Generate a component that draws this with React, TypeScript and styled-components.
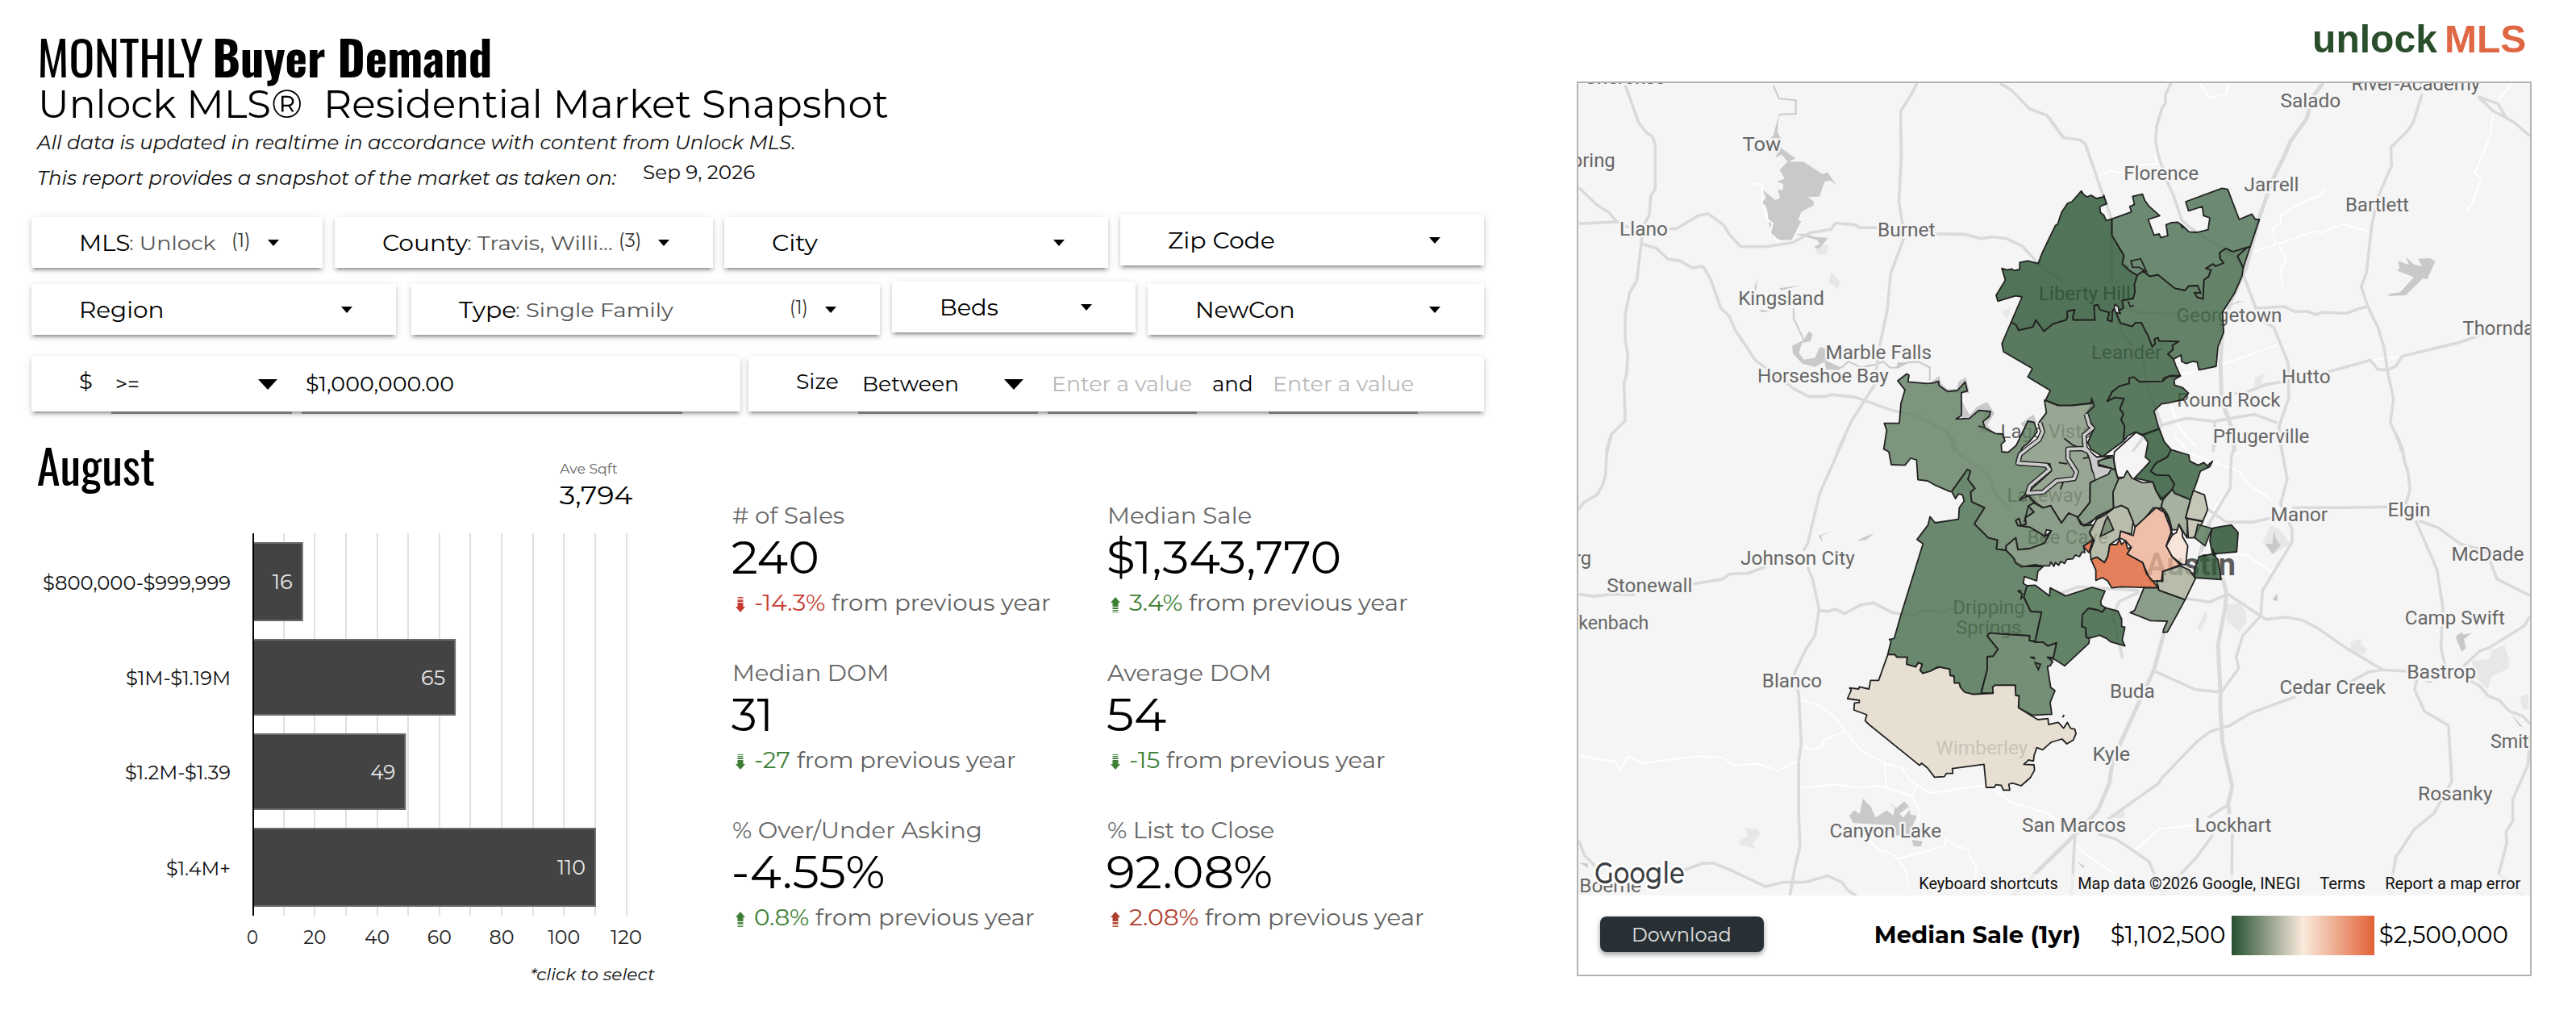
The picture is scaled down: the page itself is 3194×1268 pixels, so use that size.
import { useLayoutEffect, useRef, useState, type ReactNode } from 'react';
import styled, { createGlobalStyle } from 'styled-components';

const sans = `'Montserrat', Inter, 'Open Sans', sans-serif`;
const narrow = `'Oswald', 'Liberation Sans Narrow', Roboto, sans-serif`;

const GlobalStyles = createGlobalStyle`
  * { box-sizing: border-box; }
  body { margin: 0; background: #fff; }
`;

const Page = styled.main`
  width: 3194px;
  height: 1268px;
  display: flex;
  overflow: hidden;
  background: #fff;
  color: #000;
  font-family: ${sans};
`;

// ---------- text stretched to a given width ----------

const FitBox = styled.span<{ $w: number }>`
  display: block;
  flex: none;
  width: ${p => p.$w}px;
  white-space: nowrap;
`;

const FitInner = styled.span`
  display: inline-block;
  white-space: pre;
  transform-origin: 0 50%;
`;

const Fit = ({ w, className, children }: { w: number; className?: string; children: ReactNode }) => {
  const ref = useRef<HTMLSpanElement>(null);
  const [scale, setScale] = useState(1);

  useLayoutEffect(() => {
    const el = ref.current!;
    const em = parseFloat(getComputedStyle(el).fontSize);
    setScale((w + em * 0.08) / el.offsetWidth);
  }, [w]);

  return (
    <FitBox $w={w} className={className}>
      <FitInner ref={ref} style={{ transform: `translateX(-0.04em) scaleX(${scale})` }}>
        {children}
      </FitInner>
    </FitBox>
  );
};

// ---------- left side ----------

const Left = styled.section`
  width: 1955px;
  flex: none;
  padding-top: 35px;
`;

const Heading = styled.h1`
  margin: 0 0 2px 49px;
  display: flex;
  gap: 17px;
  font: 400 60px/68px ${narrow};
`;

const Strong = styled(Fit)`
  font-weight: 700;
`;

const SubHeading = styled.h2`
  margin: 0 0 2px 49px;
  font-size: 48px;
  line-height: 48px;
  font-weight: 400;
`;

const Note = styled.div`
  display: flex;
  margin-left: 47px;
  height: 44px;
  font-size: 24px;
  line-height: 44px;
  font-style: italic;
  color: #111;
`;

const SnapshotDate = styled(Fit)`
  margin-left: 35px;
  line-height: 29px;
  font-style: normal;
`;

const Filters = styled.div`
  margin: 26px 0 0 39px;
  width: 1801px;
`;

const FilterRow = styled.div<{ $h: number; $mb: number }>`
  display: flex;
  align-items: flex-start;
  height: ${p => p.$h}px;
  margin-bottom: ${p => p.$mb}px;
`;

const Card = styled.div<{ $w: number; $up?: boolean; $ml?: number }>`
  width: ${p => p.$w}px;
  flex: none;
  height: 100%;
  margin: ${p => (p.$up ? -3 : 0)}px 0 0 ${p => p.$ml ?? 0}px;
  padding: 0 54px 0 60px;
  display: flex;
  align-items: center;
  background: #fff;
  box-shadow: 0 6px 2px -4px rgba(0, 0, 0, 0.2), 0 4px 4px rgba(0, 0, 0, 0.16), 0 2px 10px rgba(0, 0, 0, 0.13);
  font-size: 28px;
  line-height: 40px;
`;

const Chosen = styled(Fit)`
  margin-left: 1px;
  font-size: 25px;
  line-height: 42px;
  color: #555;
`;

const Count = styled(Fit)`
  font-size: 24px;
  color: #333;
  margin: -5px 22px 0 0;
`;

const Spacer = styled.span`
  flex: 1;
`;

const Caret = styled.i<{ $big?: boolean }>`
  flex: none;
  border-style: solid;
  border-color: #000 transparent transparent;
  border-width: ${p => (p.$big ? '13px 12.5px 0' : '8px 7px 0')};
`;

const Field = styled.div<{ $w: number; $ml: number }>`
  width: ${p => p.$w}px;
  margin-left: ${p => p.$ml}px;
  height: 100%;
  flex: none;
  display: flex;
  align-items: center;
  justify-content: space-between;
  padding: 0 18px 0 6px;
  box-shadow: 0 3px 0 #777;
  font-size: 26px;
`;

const Unit = styled(Fit)`
  margin-top: -7px;
  font-size: 27px;
`;

const Placeholder = styled(Fit)`
  color: #b8b8b8;
`;

const And = styled(Fit)`
  margin: 0 0 0 20px;
  font-size: 26px;
`;

const Lower = styled.div`
  display: flex;
  align-items: flex-start;
`;

const ChartPanel = styled.div`
  width: 908px;
  flex: none;
`;

const ChartHead = styled.div`
  height: 139px;
  padding: 31px 0 0 48px;
  display: flex;
`;

const Month = styled(Fit)`
  font: 400 58px/70px ${narrow};
`;

const Sqft = styled.div`
  margin: 28px 0 0 505px;
`;

const SqftLabel = styled(Fit)`
  font-size: 17px;
  line-height: 24px;
  color: #666;
`;

const SqftValue = styled(Fit)`
  font-size: 32px;
  line-height: 42px;
`;

const ChartSvg = styled.svg`
  display: block;
  font-family: ${sans};
`;

const ClickNote = styled(Fit)`
  margin-left: 658px;
  font-size: 21px;
  line-height: 30px;
  font-style: italic;
  color: #111;
`;

const Stats = styled.div`
  display: grid;
  grid-template-columns: 464.5px 464.5px;
  row-gap: 47px;
  padding: 111px 0 0 1px;
`;

const StatLabel = styled(Fit)`
  font-size: 28px;
  line-height: 36px;
  color: #666;
`;

const StatValue = styled(Fit)`
  font-size: 57px;
  line-height: 68px;
`;

const Delta = styled.div<{ $c: string }>`
  display: flex;
  align-items: center;
  padding-left: 3px;
  font-size: 28px;
  line-height: 44px;
  color: ${p => p.$c};
`;

const DeltaArrow = styled.svg<{ $up: boolean }>`
  flex: none;
  margin: 4px 12px 0 0;
  transform: ${p => (p.$up ? 'none' : 'scaleY(-1)')};
`;

const FromPrev = styled(Fit)`
  margin-left: 10px;
  color: #5f5f5f;
`;

type FilterProps = {
  label: string;
  labelW: number;
  w: number;
  ml?: number;
  up?: boolean;
  chosen?: string;
  chosenW?: number;
  count?: string;
  countW?: number;
};

const Filter = ({ label, labelW, w, ml, up, chosen, chosenW = 0, count, countW = 0 }: FilterProps) => (
  <Card $w={w} $up={up} $ml={ml}>
    <Fit w={labelW}>{label}</Fit>
    {chosen && <Chosen w={chosenW}>{chosen}</Chosen>}
    <Spacer />
    {count && <Count w={countW}>{count}</Count>}
    <Caret />
  </Card>
);

const GREEN = '#3d8035';
const RED = '#c73a2f';

const stats = [
  { label: '# of Sales', lw: 137, value: '240', vw: 105, up: false, d: '-14.3%', dw: 86, color: RED },
  { label: 'Median Sale', lw: 177, value: '$1,343,770', vw: 287, up: true, d: '3.4%', dw: 64, color: GREEN },
  { label: 'Median DOM', lw: 192, value: '31', vw: 48, up: false, d: '-27', dw: 43, color: GREEN },
  { label: 'Average DOM', lw: 201, value: '54', vw: 70, up: false, d: '-15', dw: 36, color: GREEN },
  { label: '% Over/Under Asking', lw: 308, value: '-4.55%', vw: 186, up: true, d: '0.8%', dw: 66, color: GREEN },
  { label: '% List to Close', lw: 205, value: '92.08%', vw: 202, up: true, d: '2.08%', dw: 84, color: '#b0412f' },
];

const bars = [
  { label: '$800,000-$999,999', lw: 233, v: 16, vw: 25, y: 22, h: 98 },
  { label: '$1M-$1.19M', lw: 130, v: 65, vw: 30, y: 142, h: 95 },
  { label: '$1.2M-$1.39', lw: 131, v: 49, vw: 31, y: 259, h: 95 },
  { label: '$1.4M+', lw: 80, v: 110, vw: 35, y: 376, h: 98 },
];
const AXIS_X = 313;
const UNIT = 3.863;
const tickWidths = [14, 28, 31, 30, 31, 40, 39];

const BarChart = () => (
  <ChartSvg width="908" height="544" viewBox="0 -1 908 544">
    {Array.from({ length: 12 }, (_, i) => (
      <rect key={i} x={Math.round(AXIS_X + (i + 1) * 10 * UNIT) - 1} y="11" width="2" height="474" fill="#e0e0e0" />
    ))}
    {bars.map(b => (
      <g key={b.label}>
        <rect x={AXIS_X + 1} y={b.y + 1} width={b.v * UNIT - 1} height={b.h - 2} fill="#434343" stroke="#6a6a6a" strokeWidth="2" />
        <text x={AXIS_X + b.v * UNIT - 12 - b.vw} y={b.y + b.h / 2 + 9} fontSize="26" fill="#e6e6e6" textLength={b.vw} lengthAdjust="spacingAndGlyphs">
          {b.v}
        </text>
        <text x={286 - b.lw} y={b.y + b.h / 2 + 9.5} fontSize="24" fill="#111" textLength={b.lw} lengthAdjust="spacingAndGlyphs">
          {b.label}
        </text>
      </g>
    ))}
    <rect x={AXIS_X} y="11" width="2" height="474" fill="#000" />
    {tickWidths.map((w, i) => (
      <text key={i} x={AXIS_X + i * 20 * UNIT - w / 2} y="520" fontSize="24" fill="#222" textLength={w} lengthAdjust="spacingAndGlyphs">
        {i * 20}
      </text>
    ))}
  </ChartSvg>
);

// ---------- map ----------

const Right = styled.section`
  width: 1184px;
  flex: none;
`;

const Logo = styled.div`
  height: 101px;
  padding: 20px 9px 0 0;
  display: flex;
  justify-content: flex-end;
  gap: 13px;
  font: 700 49px/56px 'Liberation Sans', Arial, sans-serif;
  color: #2a4d2b;
`;

const LogoMls = styled(Fit)`
  color: #e06744;
`;

const MapFrame = styled.div`
  height: 1109px;
  border: 2px solid #b4b4b4;
`;

const MapArea = styled.div`
  position: relative;
  height: 1007px;
  background: #f5f5f5;
`;

const MapSvg = styled.svg`
  display: block;
  font-family: Roboto, sans-serif;

  path { vector-effect: non-scaling-stroke; }
`;

const Attribution = styled.div`
  position: absolute;
  right: 0;
  bottom: 0;
  height: 27px;
  padding: 0 13px 0 14px;
  display: flex;
  gap: 25.5px;
  background: rgba(245, 245, 245, 0.7);
  font: 400 20px/25px Roboto, sans-serif;
  color: #111;
`;

const Legend = styled.div`
  height: 98px;
  padding: 0 28px 0 27px;
  display: flex;
  align-items: center;
  font-size: 29px;
  line-height: 40px;
`;

const DownloadButton = styled.button`
  width: 203px;
  height: 44px;
  margin: -2px 138px 0 0;
  padding: 0 0 0 40px;
  border: 0;
  border-radius: 8px;
  background: #283035;
  box-shadow: 0 3px 6px rgba(0, 0, 0, 0.4);
  color: #e0e0e0;
  font: 400 25px/44px ${sans};
  text-align: left;
`;

const LegendTitle = styled(Fit)`
  margin-right: 39px;
  font-weight: 700;
`;

const Ramp = styled.div`
  width: 177px;
  height: 49px;
  margin: 0 7px 0 9px;
  background: linear-gradient(90deg, #265030, #f9eadc 50%, #e26237);
`;

// Each tile keeps its own local units; origin and scale put it on the map.
const tiles = {
  nw: 'translate(1940 0) scale(.39541 .35714)',
  ne: 'translate(2540 0) scale(.40816 .35714)',
  sw: 'translate(1940 540) scale(.39541 .44643)',
  se: 'translate(2540 540) scale(.40816 .44643)',
  north: 'translate(2260 200) scale(.35714 .33333)',
  central: 'translate(2400 460) scale(.33333)',
  south: 'translate(2260 680) scale(.33333)',
};
type Tile = keyof typeof tiles;

const roads: [Tile, string][] = [
  ['nw', 'M190 295L232 425 258 462 274 472 284 500 284 655 270 680 266 745 244 790 240 850 226 975 204 1015 190 1090 190 1180 198 1230 194 1300 186 1330 190 1460 146 1508 130 1568M45 652L100 710 140 738 165 772M45 776L165 770 200 790M325 794L350 794 420 748 450 742 500 782 515 812 552 856 630 856 715 842 770 808 835 796 850 774 910 780 925 790 980 790M1160 812L1255 813 1305 828 1340 822 1385 828 1435 854 1490 920 1568 980M244 848L288 862 325 900 360 904 400 930 434 924 458 970 490 1070 515 1095 535 1145 598 1250 720 1350 765 1376 815 1376 840 1370 910 1378 1030 1425 1100 1440 1200 1500 1225 1568M1105 288L1088 326 1054 386 1054 450 1056 540 1048 700 1066 820 1022 950 1012 1075 990 1190 970 1340 940 1390 900 1460 855 1568M1365 288L1400 312 1458 378 1512 400 1565 480'],
  ['ne', 'M0 405L45 478 95 485 112 500 160 660 192 760 192 1000 215 1140 240 1180 290 1260 300 1340 345 1480M372 288L355 330 355 358 344 378 328 440 325 490 334 540 360 630 380 680 405 765 430 790 540 870 580 910 600 980 630 1070 715 1064 750 1082 785 1080 812 1092 830 1084 905 1088 940 1072 970 1064M200 1040L240 1070 270 1084 390 1090M630 1070L650 1115 684 1135 728 1260 730 1380 700 1480 710 1568M1135 325L1108 425 1090 455 1040 512 1042 575 1002 680 982 780 966 945 950 995 970 1064 1002 1140 1020 1210 1030 1290 1048 1385 1038 1468 1065 1530 1072 1568M1305 335L1350 385 1385 405 1420 430 1462 472M1305 335L1365 360 1390 408M850 1290L978 1250 1000 1282 1030 1284 1055 1270 1075 1236 1250 1188 1320 1160M565 1365L600 1362 660 1335 705 1326M330 1480L418 1452 505 1462 625 1438 695 1468M505 1462L500 1568M345 1480L300 1500 255 1568'],
  ['sw', 'M146 0L132 50 128 110 118 140 100 165 60 185 45 205M880 0L800 160 762 300 748 320M762 365L778 400 798 482 785 555 758 590 720 660 734 720 742 855 734 905 734 1050 738 1140 722 1200 706 1278M400 412L497 398 517 384 575 382 630 364M45 440L90 446 150 440 220 442M798 485L825 488 850 482 878 494 928 470 968 464 1030 492 1090 498 1130 484 1190 490 1225 478M45 1125L62 1165 95 1195M370 1208L430 1188 465 1186 520 1206 630 1252 685 1240 755 1240 825 1222 870 1240 885 1260 915 1278M1215 0L1230 45 1330 110 1350 160 1400 210'],
  ['se', 'M575 0L555 60 552 145 490 240M515 0L500 40M700 0L725 120 705 190 740 260 740 295 650 430 645 500 590 555 570 615 578 645 525 712 445 705 325 655M545 1025L485 1060M500 1108L490 1120 450 1170 340 1278M558 1105L556 1278M80 1110L70 1278M150 1105L205 1120 305 1182 350 1278M180 1065L335 965 345 950 450 850 490 822 550 805 615 770 750 725M900 692L975 655 1015 650M1090 654L1015 650 905 590 810 530 770 512 720 504 660 510 640 498 545 440 490 462 415 452M485 205L540 240 620 240 680 228M740 200L880 200 1030 198M1115 235L1180 372 1198 480 1192 590 1205 640M1125 236L1185 256 1250 300 1330 320 1362 398 1462 444M1055 0L1075 35 1080 68 1092 100 1098 150 1085 190M1260 640L1310 598 1340 588 1445 528 1462 502M1125 655L1112 705 1142 765 1215 805 1225 960 1170 1050 1112 1092 1055 1170 1035 1278M1280 680L1310 695 1335 722 1370 735 1400 765 1440 778 1462 800M1460 870L1456 915 1410 1010 1410 1070 1390 1100 1392 1130 1368 1216 1440 1278M275 435L215 460 195 500 225 618M0 450L90 420 275 430'],
];

const highways: [Tile, string][] = [
  ['ne', 'M834 288L800 340 785 410 735 490 715 545 680 625 640 755 600 930 560 1030 530 1120 522 1260 526 1390 555 1480 565 1568'],
  ['se', 'M350 550L320 650 220 850 195 900 185 965 150 1040 100 1090 -110 1278M490 240L460 330 530 400 540 435 538 470 515 580 522 712 522 760 528 850 558 975 545 1025 550 1050'],
];

const lanes: [Tile, string][] = [
  ['nw', 'M585 648L600 638 620 640 618 710 632 735 634 760 652 775 644 810 672 838'],
  ['ne', 'M155 608L190 592 220 600 260 575 330 568 325 540M610 878L690 850 815 800 825 808 895 778 968 802M690 850L680 795 705 775 705 750 755 710 820 680 838 660M700 855L722 900 706 930 710 990M1405 290L1370 345M1350 395L1340 480 1295 600 1315 620 1285 710 1268 732M400 1300L520 1268 695 1198M370 1400L400 1490 450 1550M460 288L490 340 540 325 545 290M978 1250L1060 1238'],
  ['sw', 'M45 884L65 892 160 905 175 928 200 890 245 910 300 902 420 890 500 895 530 918 600 910 670 930 728 905M740 735L790 745 840 775 880 820 930 875 1005 910 1060 922 1080 955 1145 992 1330 970 1400 1018 1520 1050 1568 1080M740 978L845 968 930 978 985 972 1090 1000M1005 910L1008 975M750 862L770 872 805 865 812 845 880 820M1104 972L1088 1000 1110 1040 1110 1070M940 1110L985 1150 1025 1160 1045 1175 1190 1140 1195 1120 1230 1140 1265 1150 1290 1200 1290 1240M1045 1175L1070 1210 1085 1278'],
  ['se', 'M380 0L430 50 580 100 600 130 680 180M490 220L545 150M550 330L600 330 680 380M265 1150L335 1092 450 1080M0 1050L50 1110 110 1160 200 1216'],
];

const water: [Tile, string][] = [
  ['nw', 'M700 560L750 562 810 605 824 598 852 642 832 626 815 630 800 682 762 684 780 698 782 712 742 736 732 764 742 768 712 832 680 834 650 822 640 770 636 735 630 712 618 705 632 685 620 658 660 694 676 688 668 658 684 660 686 640 666 630 690 620 674 590 690 572ZM676 512L725 550 700 562 680 536 660 548ZM670 402L655 470 645 480 678 480 668 460ZM750 1180L765 1150 778 1160 770 1185 745 1190 740 1205 735 1225 750 1248 785 1242 800 1205 816 1208 818 1250 865 1275 860 1285 820 1282 815 1255 785 1274 745 1262 715 1225 714 1200ZM725 812L760 812 780 822 825 826 800 862 780 860 800 845 790 832ZM1150 1325L1175 1305 1180 1330 1200 1350 1230 1350 1235 1325 1258 1310 1270 1365 1200 1362ZM1245 1390L1270 1440 1295 1410 1325 1395 1348 1435 1325 1475 1345 1500 1300 1500 1320 1425 1245 1460ZM1430 1470L1470 1438 1480 1465 1450 1500ZM1040 1276L1045 1258 1075 1258ZM595 1000L605 964 600 1010ZM608 1075L645 1078 620 1084ZM672 1000L740 990 680 1008Z'],
  ['ne', 'M1122 898L1158 896 1175 906 1150 970 1138 965 1085 1025 1032 1027 1035 1020 1068 1014 1110 962 1060 940 1066 930 1062 905 1095 920 1085 892 1110 918 1135 925ZM545 1065L575 1045 600 1046 580 1048Z'],
  ['sw', 'M893 1055L908 1040 925 1050 935 1008 960 1030 975 1060 1010 1040 1030 1055 1035 1035 1015 1018 1040 1035 1065 1015 1080 1030 1050 1050 1062 1060 1082 1038 1085 1052 1104 1055 1080 1110 1040 1110 1030 1082 905 1075ZM1088 1122L1122 1126 1118 1140 1095 1140ZM45 1185L72 1188 74 1200ZM915 292L970 270 945 290ZM796 278L840 266 805 278 808 295Z'],
  ['se', 'M685 262L690 285 705 305 680 328 658 300 680 300ZM695 438L696 460 680 455ZM1236 558L1255 545 1260 552 1286 548 1262 565 1268 590 1255 600ZM88 1184L108 1194 106 1202ZM1405 772L1442 810 1430 806ZM1140 682L1170 682 1160 686Z'],
];

const streams: [Tile, string][] = [
  ['nw', 'M655 298L672 342 725 348 725 395 680 397 670 402M718 1070L718 1105 750 1180M865 1278L890 1255 930 1275 975 1265 1000 1255 1020 1276 1045 1276 1075 1258 1110 1256 1145 1275 1145 1320'],
];

const parks: [Tile, string][] = [
  ['nw', 'M785 850L828 852 820 884 792 884ZM835 945L865 980 855 1000 828 982ZM1370 1085L1398 1065 1390 1110Z'],
  ['ne', 'M625 1345L628 1310 660 1298 648 1320 650 1345Z'],
  ['sw', 'M545 1128L575 1110 565 1090 608 1092 612 1108 590 1130 598 1146 550 1136Z'],
  ['se', 'M540 470L580 465 600 490 600 520 580 545 540 515ZM475 488L484 500 462 542 452 535ZM918 572L950 564 950 580 968 592 955 608 920 595ZM1285 625L1340 620 1348 595 1385 582 1400 625 1398 645 1345 670 1335 705 1295 670ZM1432 725L1455 718 1462 760 1440 760ZM650 295L675 250 700 260 735 300 680 330ZM195 1062L205 1045 230 1040 230 1062Z'],
];

const zips: [Tile, string, string][] = [
  ['north', '#285230', 'M898 110L906 124 918 132 932 126 950 138 976 132 976 126 980 140 986 158 962 168 964 190 976 200 984 220 1004 214 1004 275 1030 322 1046 350 1040 382 1058 392 1062 404 1092 424 1082 458 1084 486 1078 510 1040 518 1044 545 1028 556 1026 540 1014 532 1012 548 1006 556 1004 596 988 590 995 562 962 552 955 534 942 536 945 590 870 590 868 578 875 552 848 558 850 580 845 590 800 604 768 632 740 590 730 616 680 628 672 610 654 598 692 504 670 500 608 520 602 498 634 442 622 398 640 404 656 400 664 406 684 402 684 376 712 370 748 380 762 340 808 238 815 235 830 188 850 156 865 150Z'],
  ['north', '#4a6f50', 'M1004 214L1072 188 1066 168 1082 160 1076 130 1110 122 1118 145 1132 166 1170 202 1130 216 1150 274 1168 270 1174 284 1198 276 1192 236 1210 228 1232 226 1250 240 1272 262 1300 264 1338 254 1344 210 1322 202 1318 168 1270 184 1260 150 1386 100 1406 104 1446 216 1490 196 1502 216 1516 216 1484 318 1474 320 1424 336 1400 324 1378 340 1380 362 1392 378 1364 390 1354 382 1330 398 1348 404 1340 428 1324 440 1320 512 1300 505 1290 488 1312 490 1302 462 1270 464 1258 480 1222 472 1164 422 1136 428 1112 408 1092 424 1062 404 1040 382 1046 350 1030 322 1004 275Z'],
  ['north', '#4a6f50', 'M1474 320L1440 352 1460 396 1484 318Z'],
  ['north', '#3e6544', 'M1092 424L1112 408 1136 428 1164 422 1222 472 1258 480 1270 464 1302 462 1312 490 1290 488 1300 505 1320 512 1324 440 1340 428 1348 404 1330 398 1354 382 1364 390 1392 378 1380 362 1378 340 1400 324 1424 336 1474 320 1440 352 1460 396 1456 426 1430 490 1388 560 1392 636 1372 690 1366 762 1306 776 1300 746 1285 744 1262 752 1246 744 1244 720 1218 736 1198 716 1216 700 1214 684 1236 670 1168 668 1164 656 1152 660 1154 678 1144 690 1130 650 1118 626 1106 600 1086 600 1074 614 1034 602 1018 562 1034 566 1028 556 1044 545 1040 518 1078 510 1084 486 1082 458Z'],
  ['north', '#335b3a', 'M654 598L672 610 680 628 730 616 740 590 768 632 800 604 845 590 850 580 848 558 875 552 868 578 870 590 945 590 942 536 955 534 962 552 995 562 988 590 1004 596 1006 556 1012 548 1034 602 1074 614 1086 600 1106 600 1118 626 1130 650 1144 690 1154 678 1152 660 1164 656 1168 668 1236 670 1214 684 1216 700 1198 716 1218 736 1226 760 1242 798 1210 796 1184 806 1180 818 1100 820 1080 802 1064 806 1064 826 1030 836 1004 858 988 892 1014 878 1046 882 1032 920 1044 940 1036 960 1048 985 1044 1040 1000 1075 972 1098 932 1072 920 1046 940 998 912 940 936 904 934 880 932 898 860 908 820 908 774 888 790 852 712 802 728 770 628 708 622 678Z'],
  ['north', '#335b3a', 'M1004 858L1030 836 1064 826 1064 806 1080 802 1100 820 1180 818 1200 800 1242 798 1220 812 1222 832 1250 842 1270 862 1250 886 1200 898 1176 902 1150 928 1168 996 1110 1020 1086 1006 1060 1020 1044 1040 1048 985 1036 960 1044 940 1032 920 1046 882 1014 878 988 892Z'],
  ['central', '#5f7d5f', 'M-141 36L-107 10-99 16-103 40-30 46-9 44 11 38 13 54 45 76 81 72 110 40 118 74 96 80 96 165 76 178 126 176 160 146 204 150 200 168 176 188 184 212 222 232 250 234 258 260 244 272 246 300 270 302 300 276 343 186 366 190 378 225 350 262 322 285 300 338 412 352 424 366 350 420 340 450 312 480 345 462 366 490 345 502 366 524 334 545 336 570 318 574 310 548 298 556 306 574 350 580 384 600 412 612 430 594 404 640 350 660 306 664 298 620 262 650 262 666 226 662 230 628 196 620 144 568 182 508 134 486 130 450 146 436 120 402 130 372 118 366 60 448 54 448 0 425-30 408-66 404-71 330-93 324-114 350-165 348-174 300-193 290-182 220-191 194-135 194-129 120-114 70Z'],
  ['south', '#476d4b', 'M480-212L538-294 550-288 540-258 566-224 550-210 554-174 602-152 564-92 616-40 650-32 646 2 682 6 716 40 720 52 750 66 820 66 800 85 796 120 750 104 746 130 760 138 748 180 774 234 814 236 790 344 768 342 770 324 700 320 620 314 612 325 652 374 634 400 612 402 612 450 590 530 590 540 560 542 528 534 512 516 508 500 490 500 488 474 474 472 472 448 430 440 400 456 372 464 362 452 370 430 356 424 346 440 312 430 314 404 276 404 268 394 242 394 254 344 248 338 266 334 290 250 373-18 351-34 392-88 399-119 418-96 505-109 508-152 526-177 520-200 505-203 494-186Z'],
  ['south', '#547556', 'M620 314L700 320 770 324 768 342 790 348 820 348 838 362 870 350 858 406 836 404 856 420 846 436 836 438 848 516 864 528 846 572 852 616 780 620 728 592 730 548 718 546 716 508 640 508 632 516 634 538 590 536 612 450 612 402 634 400 652 374 612 325Z'],
  ['south', '#e2d9c9', 'M242 394L268 394 276 404 314 404 312 430 346 440 356 424 370 430 362 452 372 464 400 456 430 440 472 448 474 472 488 474 490 500 508 500 512 516 528 534 560 542 634 538 632 516 640 508 716 508 718 546 730 548 728 592 800 636 838 632 840 654 876 646 896 668 910 646 922 668 938 672 942 688 932 712 908 726 890 708 850 720 818 748 796 740 786 770 784 790 766 786 748 802 786 804 788 824 772 852 738 882 706 872 692 876 696 898 672 898 664 880 644 878 638 888 608 888 600 802 482 818 484 836 460 836 452 848 416 850 390 816 368 798 360 806 172 654 158 640 164 618 116 600 118 574 136 572 136 564 92 558 106 526 100 518 134 522 136 514 172 522 178 490 208 490Z'],
  ['south', '#3e6644', 'M760 138L790 136 844 176 846 146 904 176 1002 144 1050 158 1034 196 1036 210 1052 220 1040 236 1022 228 988 222 966 246 964 290 978 294 980 330 992 334 990 352 900 436 866 414 836 404 858 406 870 350 838 362 820 348 790 348 814 236 774 234 748 180Z'],
  ['south', '#335b3a', 'M988 222L1022 228 1040 236 1052 220 1098 232 1112 262 1112 290 1124 292 1114 340 1124 362 1070 346 1056 334 1030 322 1004 330 990 332 980 330 978 294 964 290 966 246Z'],
  ['central', '#81937a', 'M405 108L455 128 510 128 580 120 584 110 590 130 560 160 562 180 580 195 590 212 550 240 548 270 570 300 590 320 600 402 575 415 574 488 530 545 495 528 468 565 428 500 400 508 370 488 345 462 355 440 430 372 425 345 310 338 312 305 390 256 400 220 385 190 412 155Z'],
  ['central', '#70886e', 'M345 502L366 490 400 508 428 500 468 565 495 528 525 540 550 575 588 572 575 605 590 630 550 650 555 675 545 672 535 690 520 684 510 698 488 700 480 715 465 708 458 722 445 712 440 726 428 710 424 724 395 724 370 720 320 728 296 712 290 695 262 666 262 650 298 620 306 664 350 660 404 640 430 594 412 590 406 616 384 600 350 580 306 574 298 556 310 548 318 574 336 570 334 545 366 524Z'],
  ['central', '#6b866b', 'M575 415L600 402 655 362 668 368 680 402 660 450 662 510 600 540 570 572 540 570 528 545 574 488Z'],
  ['central', '#6b866b', 'M602 345L610 330 662 320 668 368 655 362Z'],
  ['central', '#92a189', 'M680 402L700 395 712 370 730 398 770 415 808 412 820 445 846 478 838 510 810 508 780 545 742 580 725 540 715 512 690 500 662 510 660 450Z'],
  ['central', '#285230', 'M770 236L832 214 850 262 876 292 862 320 820 342 800 372 820 386 868 388 888 420 880 440 838 478 820 445 808 412 740 398 785 350 798 335 780 320 790 265Z'],
  ['central', '#335b3a', 'M876 292L942 312 945 334 976 350 998 340 1010 352 1030 335 1020 355 985 372 958 450 948 478 890 455 880 440 888 420 868 388 820 386 800 372 820 342 862 320Z'],
  ['central', '#92a189', 'M880 440L890 455 948 478 930 545 938 555 935 620 905 570 900 590 880 590 862 540 838 510 846 478Z'],
  ['central', '#bbbca9', 'M958 444L1000 460 1012 515 994 558 930 546 948 478Z'],
  ['central', '#bbbca9', 'M935 548L994 560 960 620 940 620Z'],
  ['central', '#547556', 'M975 570L1028 585 1002 650 964 620Z'],
  ['central', '#204a28', 'M1028 585L1050 580 1100 572 1125 600 1120 672 1030 680 1020 630Z'],
  ['central', '#335b3a', 'M980 690L1030 680 1050 700 1062 775 965 768 962 740Z'],
  ['central', '#a9af98', 'M662 510L690 500 715 512 735 560 728 606 688 595 684 620 648 645 640 690 628 712 600 692 578 700 575 670 590 630 572 600 600 550 630 535Z'],
  ['central', '#70886e', 'M640 540L662 590 612 615 630 560Z'],
  ['central', '#edb197', 'M820 508L850 525 872 580 876 600 858 650 880 690 910 720 845 745 840 780 800 782 770 712 712 680 728 655 706 630 684 620 688 595 735 612 742 580 780 545Z'],
  ['central', '#f6e1d1', 'M905 570L918 600 918 615 938 650 930 720 915 718 880 690 858 650 880 610 896 600Z'],
  ['central', '#e06334', 'M674 645L684 625 692 645 706 630 714 660 728 655 712 680 770 712 785 755 806 778 828 806 690 802 655 806 640 780 620 768 596 778 596 740 578 700 600 692 628 712 640 690 648 645Z'],
  ['central', '#e06334', 'M550 652L586 625 570 675Z'],
  ['central', '#a9af98', 'M845 745L910 724 945 740 966 772 928 850 830 815 828 800 820 780 845 782Z'],
  ['central', '#70886e', 'M775 806L828 806 830 815 928 850 890 920 862 970 846 972 848 960 862 930 800 928 724 898 740 890Z'],
];

// outlines without a fill: loops, river banks, odd corners
const outlines: [Tile, string][] = [
  ['north', 'M1070 370L1104 362 1124 410 1098 394 1076 394ZM1060 520L1068 540 1080 536M1244 236L1250 250M540 984L560 990'],
  ['central', 'M770 236L745 228 665 300 662 330 676 395 700 395M876 600L858 650M842 508C870 530 876 570 880 610M528 545L550 575 600 545 662 510M305 818L322 828 316 850M458 340L490 345M548 325L570 320M590 320L660 314M330 560L345 500M1030 660L1040 690M478 250L510 275 530 282M464 440L480 400'],
  ['south', 'M772 404L790 410 784 404ZM790 424L810 430 802 450ZM726 156L740 158M736 186L744 180M892 628L898 618M416 446L440 440'],
];

// the lake arm is drawn as a grey band with dark banks
const river = 'M388 192L398 225 385 255 345 285 314 310 306 342 412 350 424 366 350 428 342 454 400 450 450 408 515 400 524 375 492 325 492 290 545 288 572 300M560 160L572 200 584 212 552 238 556 285 580 315 600 400';
const lake = 'M548 262L575 300 600 320 655 315 604 335 606 352 655 362 642 384 600 402 582 370 575 335Z';

const places: [string, number, number, number][] = [
  ['Cherokee', 1966, 104.3, 97],
  ['Tow', 2162, 187, 44.7],
  ['Llano', 2009.6, 292, 57],
  ['Burnet', 2329.5, 293, 68.4],
  ['Kingsland', 2156.7, 378, 103.6],
  ['Marble Falls', 2265, 444.6, 128.5],
  ['Horseshoe Bay', 2180.4, 474, 159.8],
  ['Lago Vista', 2482, 543, 110.7],
  ['Liberty Hill', 2529.6, 371.7, 110.7],
  ['Leander', 2594.6, 445, 84],
  ['Florence', 2634.7, 223, 90],
  ['Jarrell', 2784, 236.8, 65],
  ['Salado', 2829, 133, 71.8],
  ['River-Academy', 2917, 112, 156.7],
  ['Bartlett', 2909.4, 262, 76],
  ['Georgetown', 2700, 399, 128],
  ['Thorndale', 3055, 415, 104],
  ['Hutto', 2830.6, 475, 57.5],
  ['Round Rock', 2700.8, 504, 125.3],
  ['Pflugerville', 2745.3, 549, 116.7],
  ['Johnson City', 2159.5, 700, 138.8],
  ['Stonewall', 1993.8, 733.8, 103.2],
  ['Luckenbach', 1922, 780, 120.8],
  ['Fredericksburg', 1817, 700, 154.6],
  ['Cherry Spring', 1861, 207, 140.3],
  ['Blanco', 2186.3, 851.6, 71.2],
  ['Canyon Lake', 2270, 1037.8, 135.6],
  ['Boerne', 1959.8, 1106, 73.5],
  ['Wimberley', 2401.8, 935, 111],
  ['Dripping', 2422.8, 761, 86.6],
  ['Springs', 2426.4, 785.5, 78.3],
  ['Lakeway', 2490, 622, 90.7],
  ['Bee Cave', 2515, 674, 97.3],
  ['Manor', 2816.7, 646, 68],
  ['Elgin', 2962, 639.6, 50],
  ['McDade', 3041, 694.5, 87],
  ['Camp Swift', 2983.3, 773.5, 121],
  ['Bastrop', 2985.7, 841, 82.9],
  ['Cedar Creek', 2828, 860, 128.6],
  ['Buda', 2617.6, 864.6, 52.7],
  ['Kyle', 2596, 942.7, 43.7],
  ['Smithville', 3089.4, 926.6, 98],
  ['Rosanky', 2999.6, 992, 89.4],
  ['San Marcos', 2508.6, 1031, 126],
  ['Lockhart', 2723, 1030.6, 92],
];

const Layer = ({ items }: { items: [Tile, string][] }) => (
  <>
    {items.map(([tile, d], i) => (
      <path key={i} transform={tiles[tile]} d={d} />
    ))}
  </>
);

const RegionMap = () => (
  <MapSvg width="1180" height="1007" viewBox="1957 103 1180 1007">
    <g fill="#e7e7e7"><Layer items={parks} /></g>
    <g fill="#c9c9c9"><Layer items={water} /></g>
    <g fill="none" stroke="#c9c9c9" strokeWidth="2"><Layer items={streams} /></g>
    <g fill="none" stroke="#fff" strokeWidth="2"><Layer items={lanes} /></g>
    <g fill="none" stroke="#dadada" strokeWidth="3.6" strokeLinejoin="round"><Layer items={roads} /></g>
    <g fill="none" stroke="#dadada" strokeWidth="5" strokeLinejoin="round"><Layer items={highways} /></g>
    <g fontSize="23.5" fill="#666" stroke="#f5f5f5" strokeWidth="5" strokeLinejoin="round" paintOrder="stroke">
      {places.map(([name, x, y, w]) => (
        <text key={name} x={x - 1.5} y={y} textLength={w + 3} lengthAdjust="spacingAndGlyphs">{name}</text>
      ))}
      <text x="2661" y="713.3" fontSize="38" fontWeight="700" fill="#5c5c5c" textLength="111" lengthAdjust="spacingAndGlyphs">Austin</text>
    </g>
    <g fillOpacity="0.8" stroke="#222" strokeWidth="1.8" strokeLinejoin="round">
      {zips.map(([tile, fill, d], i) => (
        <path key={i} transform={tiles[tile]} d={d} fill={fill} />
      ))}
    </g>
    <g fill="none" stroke="#222" strokeWidth="1.8"><Layer items={outlines} /></g>
    <g transform={tiles.central} fill="none" strokeLinejoin="round">
      <path d={river} stroke="#222" strokeWidth="6.4" />
      <path d={lake} stroke="#222" strokeWidth="1.8" fill="#c9c9c9" />
      <path d={river} stroke="#cbcbcb" strokeWidth="3.6" />
    </g>
    <text x="1977" y="1095" fontSize="38" fontFamily="Montserrat, Lato, sans-serif" fontWeight="500" fill="#3c4043" stroke="#fff" strokeWidth="6" strokeLinejoin="round" paintOrder="stroke" textLength="112" lengthAdjust="spacingAndGlyphs">
      Google
    </text>
  </MapSvg>
);

const App = () => (
  <Page>
    <GlobalStyles />
    <Left>
      <Heading>
        <Fit w={200}>MONTHLY</Fit>
        <Strong w={342}>Buyer Demand</Strong>
      </Heading>
      <SubHeading>
        <Fit w={1051}>{'Unlock MLS®  Residential Market Snapshot'}</Fit>
      </SubHeading>
      <Note>
        <Fit w={939}>All data is updated in realtime in accordance with content from Unlock MLS.</Fit>
      </Note>
      <Note>
        <Fit w={716}>This report provides a snapshot of the market as taken on:</Fit>
        <SnapshotDate w={137}>Sep 9, 2026</SnapshotDate>
      </Note>

      <Filters>
        <FilterRow $h={63} $mb={20}>
          <Filter w={361} label="MLS" labelW={61} chosen=": Unlock" chosenW={106} count="(1)" countW={22} />
          <Filter w={469} ml={15} label="County" labelW={104} chosen=": Travis, Willi..." chosenW={179} count="(3)" countW={26} />
          <Filter w={476} ml={14} label="City" labelW={55} />
          <Filter w={451} ml={15} label="Zip Code" labelW={131} up />
        </FilterRow>
        <FilterRow $h={63} $mb={27}>
          <Filter w={452} label="Region" labelW={103} />
          <Filter w={581} ml={19} label="Type" labelW={69} chosen=": Single Family" chosenW={194} count="(1)" countW={21} />
          <Filter w={302} ml={15} label="Beds" labelW={71} up />
          <Filter w={417} ml={15} label="NewCon" labelW={122} />
        </FilterRow>
        <FilterRow $h={68} $mb={0}>
          <Card $w={879}>
            <Unit w={15}>$</Unit>
            <Field $w={224} $ml={24}>
              <Fit w={28}>&gt;=</Fit>
              <Caret $big />
            </Field>
            <Field $w={472} $ml={12}>
              <Fit w={182}>$1,000,000.00</Fit>
            </Field>
          </Card>
          <Card $w={912} $ml={10}>
            <Unit w={51}>Size</Unit>
            <Field $w={223} $ml={25}>
              <Fit w={118}>Between</Fit>
              <Caret $big />
            </Field>
            <Field $w={185} $ml={12}>
              <Placeholder w={172}>Enter a value</Placeholder>
            </Field>
            <And w={49}>and</And>
            <Field $w={185} $ml={20}>
              <Placeholder w={173}>Enter a value</Placeholder>
            </Field>
          </Card>
        </FilterRow>
      </Filters>

      <Lower>
        <ChartPanel>
          <ChartHead>
            <Month w={142}>August</Month>
            <Sqft>
              <SqftLabel w={70}>Ave Sqft</SqftLabel>
              <SqftValue w={88}>3,794</SqftValue>
            </Sqft>
          </ChartHead>
          <BarChart />
          <ClickNote w={153}>*click to select</ClickNote>
        </ChartPanel>
        <Stats>
          {stats.map(s => (
            <div key={s.label}>
              <StatLabel w={s.lw}>{s.label}</StatLabel>
              <StatValue w={s.vw}>{s.value}</StatValue>
              <Delta $c={s.color}>
                <DeltaArrow $up={s.up} width="12" height="19" viewBox="0 0 12 19" fill={s.color}>
                  <path d="M6 0L12 7H9.5V12H2.5V7H0ZM2.5 13H9.5V15H2.5ZM2.5 16H9.5V17H2.5ZM2.5 18H9.5V19H2.5Z" />
                </DeltaArrow>
                <Fit w={s.dw}>{s.d}</Fit>
                <FromPrev w={270}>from previous year</FromPrev>
              </Delta>
            </div>
          ))}
        </Stats>
      </Lower>
    </Left>

    <Right>
      <Logo>
        <Fit w={151}>unlock</Fit>
        <LogoMls w={97}>MLS</LogoMls>
      </Logo>
      <MapFrame>
        <MapArea>
          <RegionMap />
          <Attribution>
            <Fit w={171.5}>Keyboard shortcuts</Fit>
            <Fit w={274.5}>Map data ©2026 Google, INEGI</Fit>
            <Fit w={55}>Terms</Fit>
            <Fit w={166.5}>Report a map error</Fit>
          </Attribution>
        </MapArea>
        <Legend>
          <DownloadButton>
            <Fit w={122}>Download</Fit>
          </DownloadButton>
          <LegendTitle w={254}>Median Sale (1yr)</LegendTitle>
          <Fit w={140}>$1,102,500</Fit>
          <Ramp />
          <Fit w={158}>$2,500,000</Fit>
        </Legend>
      </MapFrame>
    </Right>
  </Page>
);

export default App;
